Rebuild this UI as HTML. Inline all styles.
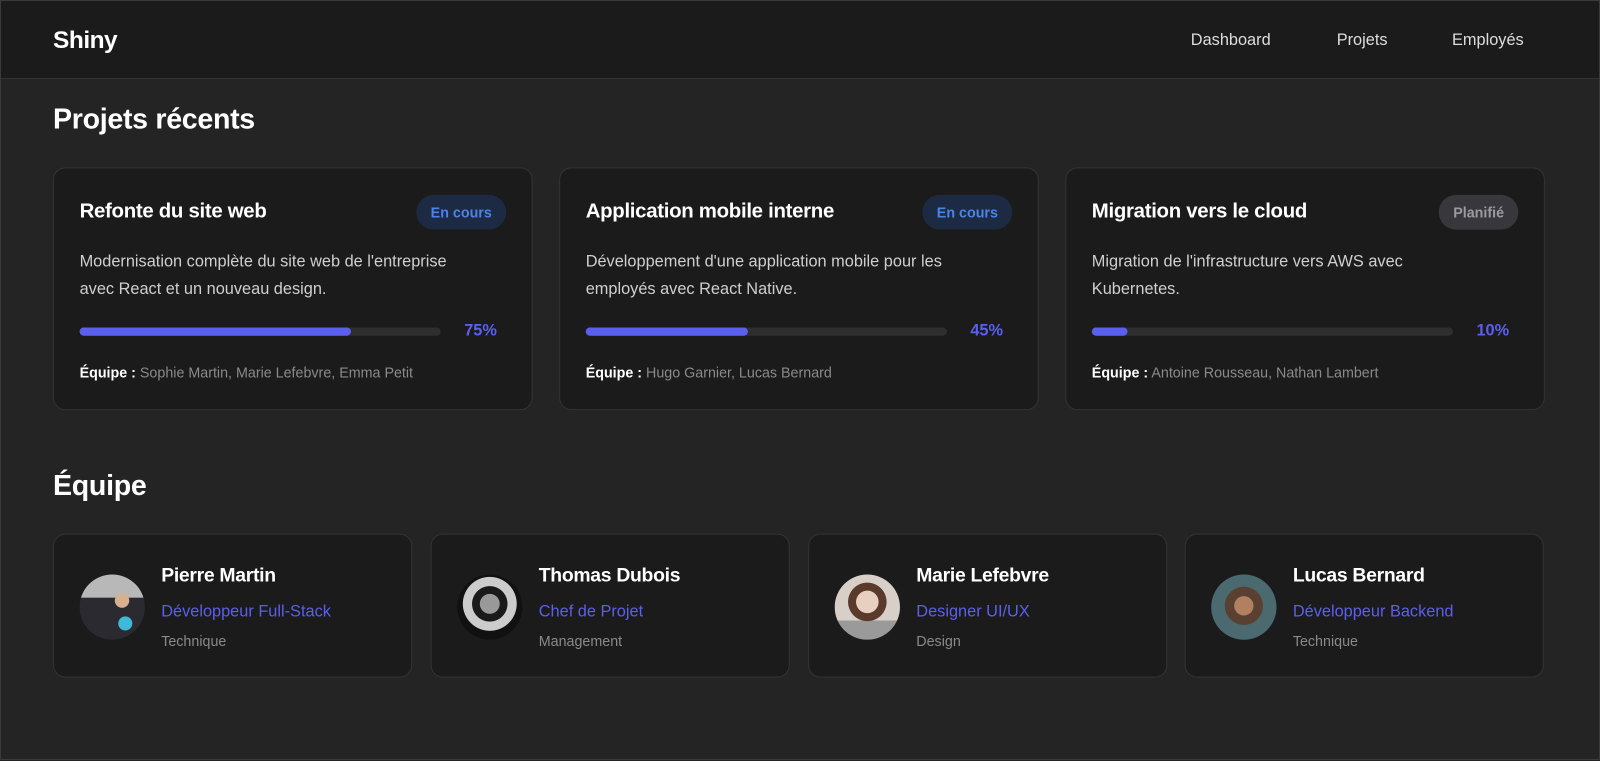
<!DOCTYPE html>
<html><head><meta charset="utf-8"><style>
*{box-sizing:border-box;margin:0;padding:0}
body{width:1600px;height:760px;overflow:hidden;background:#242424;font-family:"Liberation Sans",sans-serif;color:#fff;border:1px solid #3a3a3a;position:relative}
.hdr{position:absolute;left:0;top:0;width:1598px;height:78px;background:#1b1b1b;border-bottom:1px solid #333}
#w{position:absolute;left:0;top:0;width:1568px;height:745px;transform:scale(1.0204);transform-origin:0 0}
.logo{position:absolute;left:51px;top:25px;font-size:24px;font-weight:bold;letter-spacing:-0.5px}
.nav{position:absolute;top:30px;font-size:16px;color:#ddd}
h2{position:absolute;left:51px;font-size:28px;font-weight:bold;letter-spacing:-0.3px}
.pc{position:absolute;top:163px;width:470px;height:238px;background:#1b1b1b;border:1px solid #333;border-radius:12px}
.pt{position:absolute;left:25px;top:31px;font-size:20px;font-weight:bold;letter-spacing:-0.3px}
.bd{position:absolute;right:25px;top:26px;height:34px;border-radius:17px;padding:0 14px;line-height:34px;font-size:14px;font-weight:bold}
.b1{background:#1d2a44;color:#4a84e6}.b2{background:#38383c;color:#9a9aa0}
.pd{position:absolute;left:25px;top:78px;width:392px;font-size:16px;line-height:27px;color:#cfcfcf}
.bar{position:absolute;left:25px;top:156px;width:354px;height:8px;border-radius:4px;background:#2e2e2e}
.bar i{display:block;height:8px;border-radius:4px;background:#5b5fef}
.pct{position:absolute;left:394px;top:151px;font-size:16px;color:#5b5fef;font-weight:bold;width:40px;text-align:right}
.eq{position:absolute;left:25px;top:192px;font-size:14px;color:#8a8a8a}
.eq b{color:#fff}
.tc{position:absolute;top:522px;width:352px;height:141px;background:#1b1b1b;border:1px solid #333;border-radius:12px}
.av{position:absolute;left:25px;top:39px;width:64px;height:64px;border-radius:50%}
.nm{position:absolute;left:105px;top:30px;font-size:19px;font-weight:bold;letter-spacing:-0.3px}
.rl{position:absolute;left:105px;top:67px;font-size:16px;color:#5b5fef}
.dp{position:absolute;left:105px;top:96px;font-size:14px;color:#8a8a8a}
</style></head><body>
<div class="hdr"></div>
<div id="w">
<div class="logo">Shiny</div>
<div class="nav" style="left:1166px">Dashboard</div>
<div class="nav" style="left:1309px">Projets</div>
<div class="nav" style="left:1422px">Employés</div>
<h2 style="top:100px">Projets récents</h2>
<div class="pc" style="left:51px"><div class="pt">Refonte du site web</div><div class="bd b1">En cours</div>
<div class="pd">Modernisation complète du site web de l'entreprise avec React et un nouveau design.</div>
<div class="bar"><i style="width:75%"></i></div><div class="pct">75%</div>
<div class="eq"><b>Équipe :</b> Sophie Martin, Marie Lefebvre, Emma Petit</div></div>
<div class="pc" style="left:547px"><div class="pt">Application mobile interne</div><div class="bd b1">En cours</div>
<div class="pd">Développement d'une application mobile pour les employés avec React Native.</div>
<div class="bar"><i style="width:45%"></i></div><div class="pct">45%</div>
<div class="eq"><b>Équipe :</b> Hugo Garnier, Lucas Bernard</div></div>
<div class="pc" style="left:1043px"><div class="pt">Migration vers le cloud</div><div class="bd b2">Planifié</div>
<div class="pd">Migration de l'infrastructure vers AWS avec Kubernetes.</div>
<div class="bar"><i style="width:10%"></i></div><div class="pct">10%</div>
<div class="eq"><b>Équipe :</b> Antoine Rousseau, Nathan Lambert</div></div>
<h2 style="top:459px">Équipe</h2>
<div class="tc" style="left:51px"><div class="av" style="background:radial-gradient(circle at 65% 40%,#d8b090 0 12%,transparent 13%),radial-gradient(circle at 70% 75%,#40b8d8 0 10%,transparent 11%),linear-gradient(180deg,#b8b8b8 0 35%,#2a2a30 36%);"></div><div class="nm">Pierre Martin</div><div class="rl">Développeur Full-Stack</div><div class="dp">Technique</div></div>
<div class="tc" style="left:421px"><div class="av" style="background:radial-gradient(circle at 50% 45%,#999 0 20%,#1a1a1a 21% 36%,#ccc 37% 55%,#111 56%);"></div><div class="nm">Thomas Dubois</div><div class="rl">Chef de Projet</div><div class="dp">Management</div></div>
<div class="tc" style="left:791px"><div class="av" style="background:radial-gradient(circle at 50% 42%,#e8cfc0 0 22%,#5a3a2a 23% 38%,transparent 39%),linear-gradient(180deg,#d8d0c8 0 70%,#9a9a9a 71%);"></div><div class="nm">Marie Lefebvre</div><div class="rl">Designer UI/UX</div><div class="dp">Design</div></div>
<div class="tc" style="left:1160px"><div class="av" style="background:radial-gradient(circle at 50% 48%,#b08060 0 20%,#5a4030 21% 40%,#4a6a70 41%);"></div><div class="nm">Lucas Bernard</div><div class="rl">Développeur Backend</div><div class="dp">Technique</div></div>
</div>
</body></html>
